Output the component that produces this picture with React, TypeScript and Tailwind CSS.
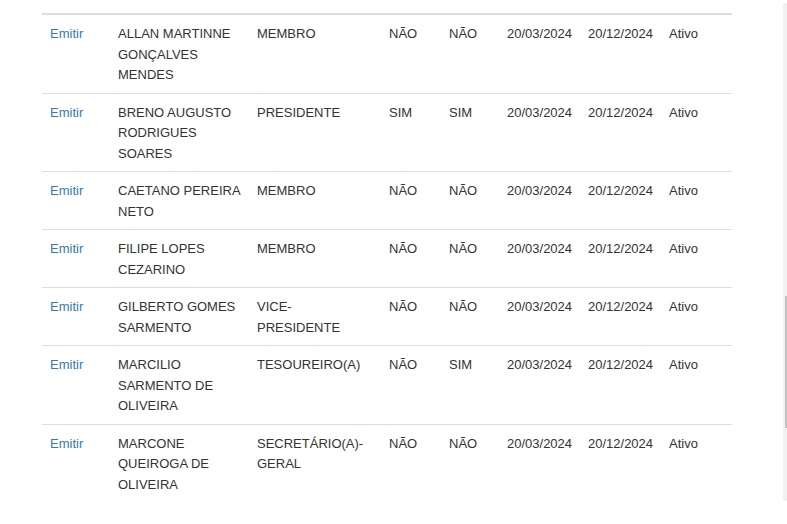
type Membro = {
  nome: string[];
  cargo: string[];
  a: string;
  b: string;
  inicio: string;
  fim: string;
  situacao: string;
};

const MEMBROS: Membro[] = [
  { nome: ["ALLAN MARTINNE", "GONÇALVES", "MENDES"], cargo: ["MEMBRO"], a: "NÃO", b: "NÃO", inicio: "20/03/2024", fim: "20/12/2024", situacao: "Ativo" },
  { nome: ["BRENO AUGUSTO", "RODRIGUES", "SOARES"], cargo: ["PRESIDENTE"], a: "SIM", b: "SIM", inicio: "20/03/2024", fim: "20/12/2024", situacao: "Ativo" },
  { nome: ["CAETANO PEREIRA", "NETO"], cargo: ["MEMBRO"], a: "NÃO", b: "NÃO", inicio: "20/03/2024", fim: "20/12/2024", situacao: "Ativo" },
  { nome: ["FILIPE LOPES", "CEZARINO"], cargo: ["MEMBRO"], a: "NÃO", b: "NÃO", inicio: "20/03/2024", fim: "20/12/2024", situacao: "Ativo" },
  { nome: ["GILBERTO GOMES", "SARMENTO"], cargo: ["VICE-", "PRESIDENTE"], a: "NÃO", b: "NÃO", inicio: "20/03/2024", fim: "20/12/2024", situacao: "Ativo" },
  { nome: ["MARCILIO", "SARMENTO DE", "OLIVEIRA"], cargo: ["TESOUREIRO(A)"], a: "NÃO", b: "SIM", inicio: "20/03/2024", fim: "20/12/2024", situacao: "Ativo" },
  { nome: ["MARCONE", "QUEIROGA DE", "OLIVEIRA"], cargo: ["SECRETÁRIO(A)-", "GERAL"], a: "NÃO", b: "NÃO", inicio: "20/03/2024", fim: "20/12/2024", situacao: "Ativo" },
];

const Lines = ({ lines }: { lines: string[] }) => (
  <>
    {lines.map((l, i) => (
      <div key={i} className="whitespace-nowrap">{l}</div>
    ))}
  </>
);

export default function App() {
  return (
    <div className="relative w-[787px] h-[524px] bg-white overflow-hidden font-['Liberation_Sans',Arial,sans-serif] text-[13px] leading-[20.5px] text-[#333]">
      <div className="pt-[13px] pl-[42px]">
        <table className="w-[690px] table-fixed border-collapse border-t-2 border-[#ddd]">
          <colgroup>
            <col className="w-[68px]" />
            <col className="w-[139px]" />
            <col className="w-[132px]" />
            <col className="w-[60px]" />
            <col className="w-[58px]" />
            <col className="w-[81px]" />
            <col className="w-[81px]" />
            <col className="w-[71px]" />
          </colgroup>
          <tbody>
            {MEMBROS.map((m, i) => (
              <tr key={i} className={i > 0 ? "border-t border-[#ddd]" : ""}>
                <td className="px-2 pt-[9px] pb-[7px] align-top">
                  <a href="#" className="text-[#337ab7] no-underline">Emitir</a>
                </td>
                <td className="px-2 pt-[9px] pb-[7px] align-top">
                  <Lines lines={m.nome} />
                </td>
                <td className="px-2 pt-[9px] pb-[7px] align-top">
                  <Lines lines={m.cargo} />
                </td>
                <td className="px-2 pt-[9px] pb-[7px] align-top">{m.a}</td>
                <td className="px-2 pt-[9px] pb-[7px] align-top">{m.b}</td>
                <td className="px-2 pt-[9px] pb-[7px] align-top">{m.inicio}</td>
                <td className="px-2 pt-[9px] pb-[7px] align-top">{m.fim}</td>
                <td className="px-2 pt-[9px] pb-[7px] align-top">{m.situacao}</td>
              </tr>
            ))}
          </tbody>
        </table>
      </div>

      {/* scrollbar da pagina */}
      <div className="absolute left-[783px] top-[3px] w-[4px] h-[498px] bg-[#f1f1f1]">
        <div className="ml-[2px] mt-[293px] w-[2px] h-[132px] bg-[#c1c1c1]" />
      </div>
    </div>
  );
}
